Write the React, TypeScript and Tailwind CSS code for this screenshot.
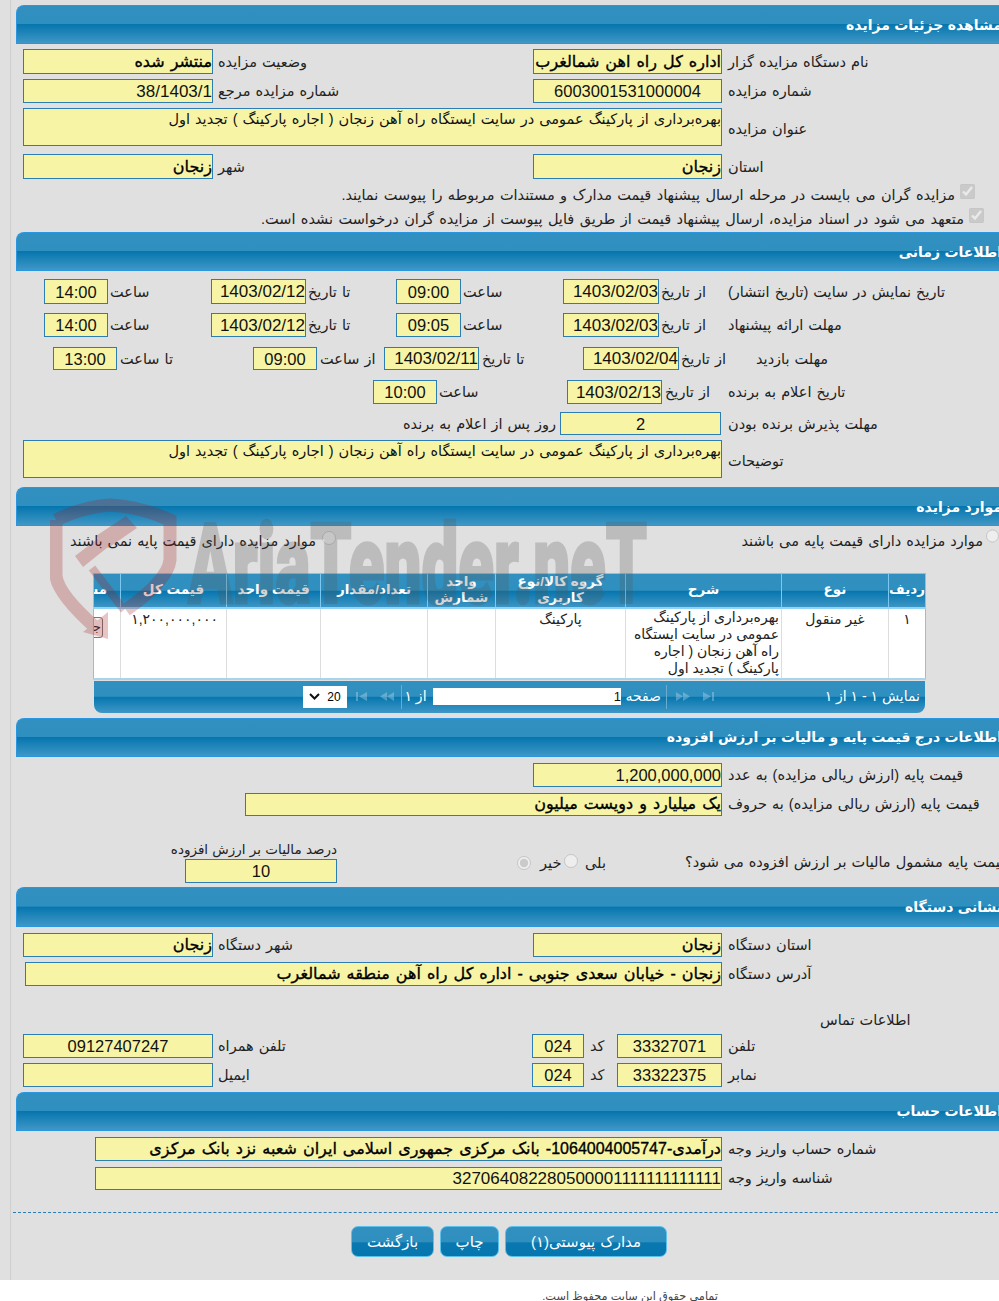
import type { ReactNode } from "react";

const HEAD_BG =
  "bg-[linear-gradient(to_bottom,#3190c0_0%,#2f8fbf_48%,#0676ae_50%,#3f97c6_100%)]";

function Header({ title, className }: { title: string; className?: string }) {
  return (
    <div
      dir="rtl"
      className={`w-[988px] shrink-0 flex items-center rounded-tl-[8px] border-t border-l border-b border-[#2a96e0] text-white font-bold text-[14px] [word-spacing:0.5px] leading-none pr-[2px] ${HEAD_BG} ${className ?? "h-[39px]"}`}
    >
      {title}
    </div>
  );
}

// yellow read-only box, value sits against the right edge unless centered
function F({
  v,
  c,
  bold,
  center,
  top,
  big,
}: {
  v?: string;
  c: string;
  bold?: boolean;
  center?: boolean;
  top?: boolean;
  big?: boolean;
}) {
  let type = "items-center text-[16.5px] pt-[1px]";
  if (big) type = "items-center text-[17px] pt-[1px]";
  if (top) type = "items-start text-[14.5px] [word-spacing:1px]";
  if (bold) type = "items-center text-[16px] [word-spacing:1.6px] [-webkit-text-stroke:0.35px_#000] text-black";
  return (
    <div
      dir="rtl"
      className={`shrink-0 h-full border border-[#2b7db4] bg-[#f7f5a5] text-[#111] whitespace-nowrap overflow-hidden flex ${type} ${center ? "justify-center" : "justify-start"} ${c}`}
    >
      {v}
    </div>
  );
}

function L({ t, c, right }: { t: string; c: string; right?: boolean }) {
  return (
    <div
      dir="rtl"
      className={`shrink-0 h-full flex items-center ${right ? "justify-start [word-spacing:1.4px]" : "justify-end [word-spacing:1px]"} pt-[2px] whitespace-nowrap text-[14.5px] text-[#222] ${c}`}
    >
      {t}
    </div>
  );
}

function Row({ c, children }: { c: string; children: ReactNode }) {
  return <div className={`flex shrink-0 ${c}`}>{children}</div>;
}

function Btn({ t, c }: { t: string; c: string }) {
  return (
    <div
      dir="rtl"
      className={`h-[31px] pt-[2px] flex items-center justify-center rounded-[7px] border border-[#5cc0ea] text-white text-[15px] [word-spacing:1px] bg-[linear-gradient(to_bottom,#3190c0_0%,#2f8fbf_50%,#0a78b0_55%,#0676ae_100%)] ${c}`}
    >
      {t}
    </div>
  );
}

function Tri({ dbl, flip }: { dbl?: boolean; flip?: boolean }) {
  return (
    <svg width="15" height="9" viewBox="0 0 15 9" className={`opacity-30 ${flip ? "-scale-x-100" : ""}`} fill="#dff2fb">
      {dbl ? (
        <path d="M0 0l7 4.5L0 9zM7 0l7 4.5L7 9z" />
      ) : (
        <path d="M2 0l8 4.5L2 9zM11 0h2v9h-2z" />
      )}
    </svg>
  );
}

const COLS = [
  ["w-[37px]", "ردیف"],
  ["w-[107px]", "نوع"],
  ["w-[156px]", "شرح"],
  ["w-[130px]", "گروه کالا/نوع کاربری"],
  ["w-[68px]", "واحد شمارش"],
  ["w-[107px]", "تعداد/مقدار"],
  ["w-[94px]", "قیمت واحد"],
  ["w-[106px]", "قیمت کل"],
];

function ItemsTable() {
  return (
    <div className="ml-[77px] mt-[20px] w-[832px] shrink-0">
      <table dir="rtl" className="table-fixed w-[832px] border-collapse text-[14px] text-[#222] border border-[#85c4e8] border-b-2 border-b-[#a8d4ec]">
        <thead>
          <tr className={`h-[34px] ${HEAD_BG}`}>
            {COLS.map(([w, t]) => (
              <th key={t} className={`${w} border-l border-[#7cc8f0] border-b-2 border-b-[#8fd4f8] p-0 text-white font-bold text-[13.5px] leading-[16px] text-center`}>
                {t}
              </th>
            ))}
            <th className="w-[27px] border-b-2 border-b-[#8fd4f8] p-0 text-white font-bold text-[13.5px] overflow-hidden">
              <div className="w-[27px] overflow-hidden whitespace-nowrap pr-[13px]">مشاهده</div>
            </th>
          </tr>
        </thead>
        <tbody>
          <tr className="h-[71px] bg-white align-top">
            <td className="border-l border-[#ddd] text-center">۱</td>
            <td className="border-l border-[#ddd] text-center">غیر منقول</td>
            <td className="border-l border-[#ddd] px-[2px] leading-[17px]">
              بهره‌برداری از پارکینگ عمومی در سایت ایستگاه راه آهن زنجان ( اجاره پارکینگ ) تجدید اول
            </td>
            <td className="border-l border-[#ddd] text-center">پارکینگ</td>
            <td className="border-l border-[#ddd]"></td>
            <td className="border-l border-[#ddd]"></td>
            <td className="border-l border-[#ddd]"></td>
            <td className="border-l border-[#ddd] text-right pr-[8px]">۱,۲۰۰,۰۰۰,۰۰۰</td>
            <td className="overflow-hidden pt-[8px]">
              <div className="flex w-[27px] overflow-hidden pr-[17px]">
                <div className="shrink-0 w-[44px] h-[21px] border border-[#777] rounded-[3px] bg-[#efefef]/60 text-[13px] flex items-center pr-[1px]">جزئیات</div>
              </div>
            </td>
          </tr>
        </tbody>
      </table>
      <div className={`ml-[1px] mt-[1px] h-[32px] w-[831px] rounded-b-[8px] flex items-center text-white text-[14px] ${HEAD_BG}`}>
        <div className="ml-[209px] w-[44px] h-[22px] bg-white text-black flex items-center justify-center gap-[7px] text-[12px]">
          <svg width="11" height="7" viewBox="0 0 11 7" fill="none" stroke="#111" strokeWidth="2"><path d="M1 1l4.5 4.5L10 1" /></svg>
          20
        </div>
        <div className="ml-[7px]"><Tri flip /></div>
        <div className="ml-[10px]"><Tri dbl flip /></div>
        <div className="ml-[7px] w-[1px] h-[24px] bg-[#6aaccd]" />
        <div dir="rtl" className="w-[27px] text-center">از ۱</div>
        <div dir="rtl" className="ml-[4px] w-[188px] h-[17px] bg-white text-[#111] text-[13px] leading-[17px]">1</div>
        <div dir="rtl" className="ml-[5px] w-[35px] text-center">صفحه</div>
        <div className="ml-[5px] w-[1px] h-[24px] bg-[#6aaccd]" />
        <div className="ml-[9px]"><Tri dbl /></div>
        <div className="ml-[10px]"><Tri /></div>
        <div dir="rtl" className="ml-auto mr-[5px]">نمایش ۱ - ۱ از ۱</div>
      </div>
    </div>
  );
}

function Watermark() {
  return (
    <div aria-hidden className="absolute left-[50px] top-[498px] w-[610px] h-[145px] pointer-events-none">
      <svg width="130" height="145" viewBox="0 0 130 145" className="absolute left-0 top-0 opacity-25" fill="none">
        <path d="M6 22Q32 9 60 7Q92 9 120 22V62Q118 82 76 112" stroke="#a81c1c" strokeWidth="13" />
        <path d="M6 22V78Q8 96 46 130" stroke="#a81c1c" strokeWidth="13" />
        <path d="M33 134L58 114V141z" fill="#a81c1c" />
        <path d="M25 58L50 39L58 49L33 69zM46 38L76 18L87 30L58 50z" fill="#a81c1c" />
        <path d="M42 70L74 112" stroke="#a81c1c" strokeWidth="8" />
      </svg>
      <div className="absolute left-[138px] top-[6px] origin-left whitespace-nowrap text-[112px] leading-[122px] font-black text-[#555] opacity-25 [font-family:Roboto,sans-serif] [-webkit-text-stroke:3px_#555] scale-x-[0.585]">
        AriaTender.neT
      </div>
    </div>
  );
}

export default function App() {
  return (
    <div className="relative w-[999px] h-[1301px] overflow-hidden bg-white [font-family:'Liberation_Sans','DejaVu_Sans',sans-serif]">
      <div className="h-[1280px] bg-[#e0e0e0] pl-[16px] pt-[5px] flex flex-col relative">
        <div className="absolute left-[10px] top-0 bottom-0 w-[1px] bg-[#cfcfcf]" />

        <Header title="مشاهده جزئیات مزایده" />
        <Row c="mt-[5px] h-[25px] pl-[7px]">
          <F c="w-[190px]" bold v="منتشر شده" />
          <L c="ml-[5px] w-[315px]" t="وضعیت مزایده" />
          <F c="w-[189px]" bold v="اداره کل راه اهن شمالغرب" />
          <L c="ml-[6px] w-[150px]" t="نام دستگاه مزایده گزار" />
        </Row>
        <Row c="mt-[5px] h-[24px] pl-[7px]">
          <F c="w-[190px]" big v="38/1403/1" />
          <L c="ml-[5px] w-[315px]" t="شماره مزایده مرجع" />
          <F c="w-[189px]" center v="6003001531000004" />
          <L c="ml-[6px] w-[150px]" t="شماره مزایده" />
        </Row>
        <Row c="mt-[5px] h-[38px] pl-[7px]">
          <F c="w-[699px]" top v="بهره‌برداری از پارکینگ عمومی در سایت ایستگاه راه آهن زنجان ( اجاره پارکینگ ) تجدید اول" />
          <L c="ml-[6px] w-[150px] pt-[5px]" t="عنوان مزایده" />
        </Row>
        <Row c="mt-[8px] h-[25px] pl-[7px]">
          <F c="w-[190px]" bold v="زنجان" />
          <L c="ml-[5px] w-[315px]" t="شهر" />
          <F c="w-[189px]" bold v="زنجان" />
          <L c="ml-[6px] w-[150px]" t="استان" />
        </Row>
        <Row c="mt-[4px] h-[24px] pl-[327px]">
          <L c="w-[612px]" right t="مزایده گران می بایست در مرحله ارسال پیشنهاد قیمت مدارک و مستندات مربوطه را پیوست نمایند." />
          <input type="checkbox" checked disabled readOnly className="ml-[5px] mt-[1px] w-[15px] h-[15px]" />
        </Row>
        <Row c="h-[24px] pl-[244px]">
          <L c="w-[704px]" right t="متعهد می شود در اسناد مزایده، ارسال پیشنهاد قیمت از طریق فایل پیوست از مزایده گران درخواست نشده است." />
          <input type="checkbox" checked disabled readOnly className="ml-[5px] mt-[1px] w-[15px] h-[15px]" />
        </Row>

        <Header title="اطلاعات زمانی" className="mt-[1px] h-[39px]" />
        <Row c="mt-[8px] h-[25px] pl-[28px]">
          <F c="w-[64px]" center v="14:00" />
          <L c="ml-[2px] w-[101px]" t="ساعت" />
          <F c="w-[95px]" big v="1403/02/12" />
          <L c="ml-[2px] w-[88px]" t="تا تاریخ" />
          <F c="w-[65px]" center v="09:00" />
          <L c="ml-[2px] w-[100px]" t="ساعت" />
          <F c="w-[96px]" big v="1403/02/03" />
          <L c="ml-[2px] w-[67px]" t="از تاریخ" />
          <L c="w-[240px]" t="تاریخ نمایش در سایت (تاریخ انتشار)" />
        </Row>
        <Row c="mt-[9px] h-[24px] pl-[28px]">
          <F c="w-[64px]" center v="14:00" />
          <L c="ml-[2px] w-[101px]" t="ساعت" />
          <F c="w-[95px]" big v="1403/02/12" />
          <L c="ml-[2px] w-[88px]" t="تا تاریخ" />
          <F c="w-[65px]" center v="09:05" />
          <L c="ml-[2px] w-[100px]" t="ساعت" />
          <F c="w-[96px]" big v="1403/02/03" />
          <L c="ml-[2px] w-[67px]" t="از تاریخ" />
          <L c="w-[240px]" t="مهلت ارائه پیشنهاد" />
        </Row>
        <Row c="mt-[10px] h-[23px] pl-[37px]">
          <F c="w-[64px]" center v="13:00" />
          <L c="ml-[3px] w-[133px]" t="تا ساعت" />
          <F c="w-[64px]" center v="09:00" />
          <L c="ml-[3px] w-[64px]" t="از ساعت" />
          <F c="w-[95px]" big v="1403/02/11" />
          <L c="ml-[3px] w-[101px]" t="تا تاریخ" />
          <F c="w-[96px]" big v="1403/02/04" />
          <L c="ml-[2px] w-[47px]" t="از تاریخ" />
          <L c="ml-[28px] w-[240px]" t="مهلت بازدید" />
        </Row>
        <Row c="mt-[10px] h-[24px] pl-[357px]">
          <F c="w-[64px]" center v="10:00" />
          <L c="ml-[2px] w-[128px]" t="ساعت" />
          <F c="w-[95px]" big v="1403/02/13" />
          <L c="ml-[3px] w-[63px]" t="از تاریخ" />
          <L c="w-[240px]" t="تاریخ اعلام به برنده" />
        </Row>
        <Row c="mt-[8px] h-[23px] pl-[387px]">
          <L c="w-[148px]" t="روز پس از اعلام به برنده" />
          <F c="ml-[9px] w-[161px]" center v="2" />
          <L c="ml-[7px] w-[240px]" t="مهلت پذیرش برنده بودن" />
        </Row>
        <Row c="mt-[5px] h-[38px] pl-[7px]">
          <F c="w-[699px]" top v="بهره‌برداری از پارکینگ عمومی در سایت ایستگاه راه آهن زنجان ( اجاره پارکینگ ) تجدید اول" />
          <L c="ml-[6px] w-[150px] pt-[6px]" t="توضیحات" />
        </Row>

        <Header title="موارد مزایده" className="mt-[9px] h-[39px]" />
        <Row c="mt-[3px] h-[24px] pl-[54px]">
          <L c="w-[250px]" t="موارد مزایده دارای قیمت پایه نمی باشند" />
          <input type="radio" disabled readOnly className="ml-[2px] w-[14px] h-[14px] mt-[2px]" />
          <L c="ml-[406px] w-[243px]" t="موارد مزایده دارای قیمت پایه می باشند" />
          <input type="radio" disabled readOnly className="ml-[1px] w-[14px] h-[14px]" />
        </Row>
        <ItemsTable />

        <Header title="اطلاعات درج قیمت پایه و مالیات بر ارزش افزوده" className="mt-[5px] h-[39px]" />
        <Row c="mt-[6px] h-[24px] pl-[517px]">
          <F c="w-[189px]" v="1,200,000,000" />
          <L c="ml-[6px] w-[260px]" t="قیمت پایه (ارزش ریالی مزایده) به عدد" />
        </Row>
        <Row c="mt-[6px] h-[23px] pl-[229px]">
          <F c="w-[477px]" bold v="یک میلیارد و دویست میلیون" />
          <L c="ml-[6px] w-[260px]" t="قیمت پایه (ارزش ریالی مزایده) به حروف" />
        </Row>
        <Row c="mt-[27px] h-[40px] pl-[153px]">
          <div className="w-[168px] h-[40px] shrink-0 flex flex-col">
            <div dir="rtl" className="h-[16px] shrink-0 flex items-center whitespace-nowrap text-[13.5px] [word-spacing:0.5px] text-[#222]">
              درصد مالیات بر ارزش افزوده
            </div>
            <div className="h-[24px] shrink-0 flex pl-[16px]">
              <F c="w-[152px]" center v="10" />
            </div>
          </div>
          <div className="ml-[180px] flex items-center h-[40px] shrink-0">
            <input type="radio" checked disabled readOnly className="w-[14px] h-[14px]" />
            <L c="ml-[9px] w-[20px]" t="خیر" />
            <input type="radio" disabled readOnly className="ml-[4px] w-[14px] h-[14px] -mt-[3px]" />
            <L c="ml-[7px] w-[24px]" t="بلی" />
          </div>
          <div dir="rtl" className="ml-[76px] h-[40px] pt-[1px] flex items-center justify-end whitespace-nowrap w-[316px] text-[14.5px] [word-spacing:1px] text-[#222] shrink-0">
            قیمت پایه مشمول مالیات بر ارزش افزوده می شود؟
          </div>
        </Row>

        <Header title="نشانی دستگاه" className="mt-[4px] h-[40px]" />
        <Row c="mt-[6px] h-[24px] pl-[7px]">
          <F c="w-[190px]" bold v="زنجان" />
          <L c="ml-[5px] w-[315px]" t="شهر دستگاه" />
          <F c="w-[189px]" bold v="زنجان" />
          <L c="ml-[6px] w-[150px]" t="استان دستگاه" />
        </Row>
        <Row c="mt-[5px] h-[24px] pl-[9px]">
          <F c="w-[697px]" bold v="زنجان - خیابان سعدی جنوبی - اداره کل راه آهن منطقه شمالغرب" />
          <L c="ml-[6px] w-[150px]" t="آدرس دستگاه" />
        </Row>
        <Row c="mt-[24px] h-[20px] pl-[804px]">
          <L c="w-[92px]" t="اطلاعات تماس" />
        </Row>
        <Row c="mt-[4px] h-[24px] pl-[7px]">
          <F c="w-[190px]" center v="09127407247" />
          <L c="ml-[5px] w-[314px]" t="تلفن همراه" />
          <F c="w-[52px]" center v="024" />
          <L c="ml-[6px] w-[27px]" t="کد" />
          <F c="w-[105px]" center v="33327071" />
          <L c="ml-[6px] w-[40px]" t="تلفن" />
        </Row>
        <Row c="mt-[5px] h-[24px] pl-[7px]">
          <F c="w-[190px]" />
          <L c="ml-[5px] w-[314px]" t="ایمیل" />
          <F c="w-[52px]" center v="024" />
          <L c="ml-[6px] w-[27px]" t="کد" />
          <F c="w-[105px]" center v="33322375" />
          <L c="ml-[6px] w-[40px]" t="نمابر" />
        </Row>

        <Header title="اطلاعات حساب" className="mt-[5px] h-[39px]" />
        <Row c="mt-[6px] h-[24px] pl-[79px]">
          <F c="w-[627px]" bold v="درآمدی-1064004005747- بانک مرکزی جمهوری اسلامی ایران شعبه نزد بانک مرکزی" />
          <L c="ml-[6px] w-[150px]" t="شماره حساب واریز وجه" />
        </Row>
        <Row c="mt-[6px] h-[23px] pl-[79px]">
          <F c="w-[627px]" big v="327064082280500001111111111111" />
          <L c="ml-[6px] w-[150px]" t="شناسه واریز وجه" />
        </Row>

        <div className="mt-[22px] -ml-[3px] w-[990px] h-0 border-t border-dashed border-[#2b7db4]" />
        <div className="mt-[13px] ml-[335px] flex gap-[6px]">
          <Btn c="w-[83px]" t="بازگشت" />
          <Btn c="w-[59px]" t="چاپ" />
          <Btn c="w-[162px]" t="مدارک پیوستی(۱)" />
        </div>
      </div>
      <div dir="rtl" className="pr-[281px] pt-[8px] text-[11.3px] text-[#444] whitespace-nowrap">
        تمامی حقوق این سایت محفوظ است.
      </div>
      <Watermark />
    </div>
  );
}
